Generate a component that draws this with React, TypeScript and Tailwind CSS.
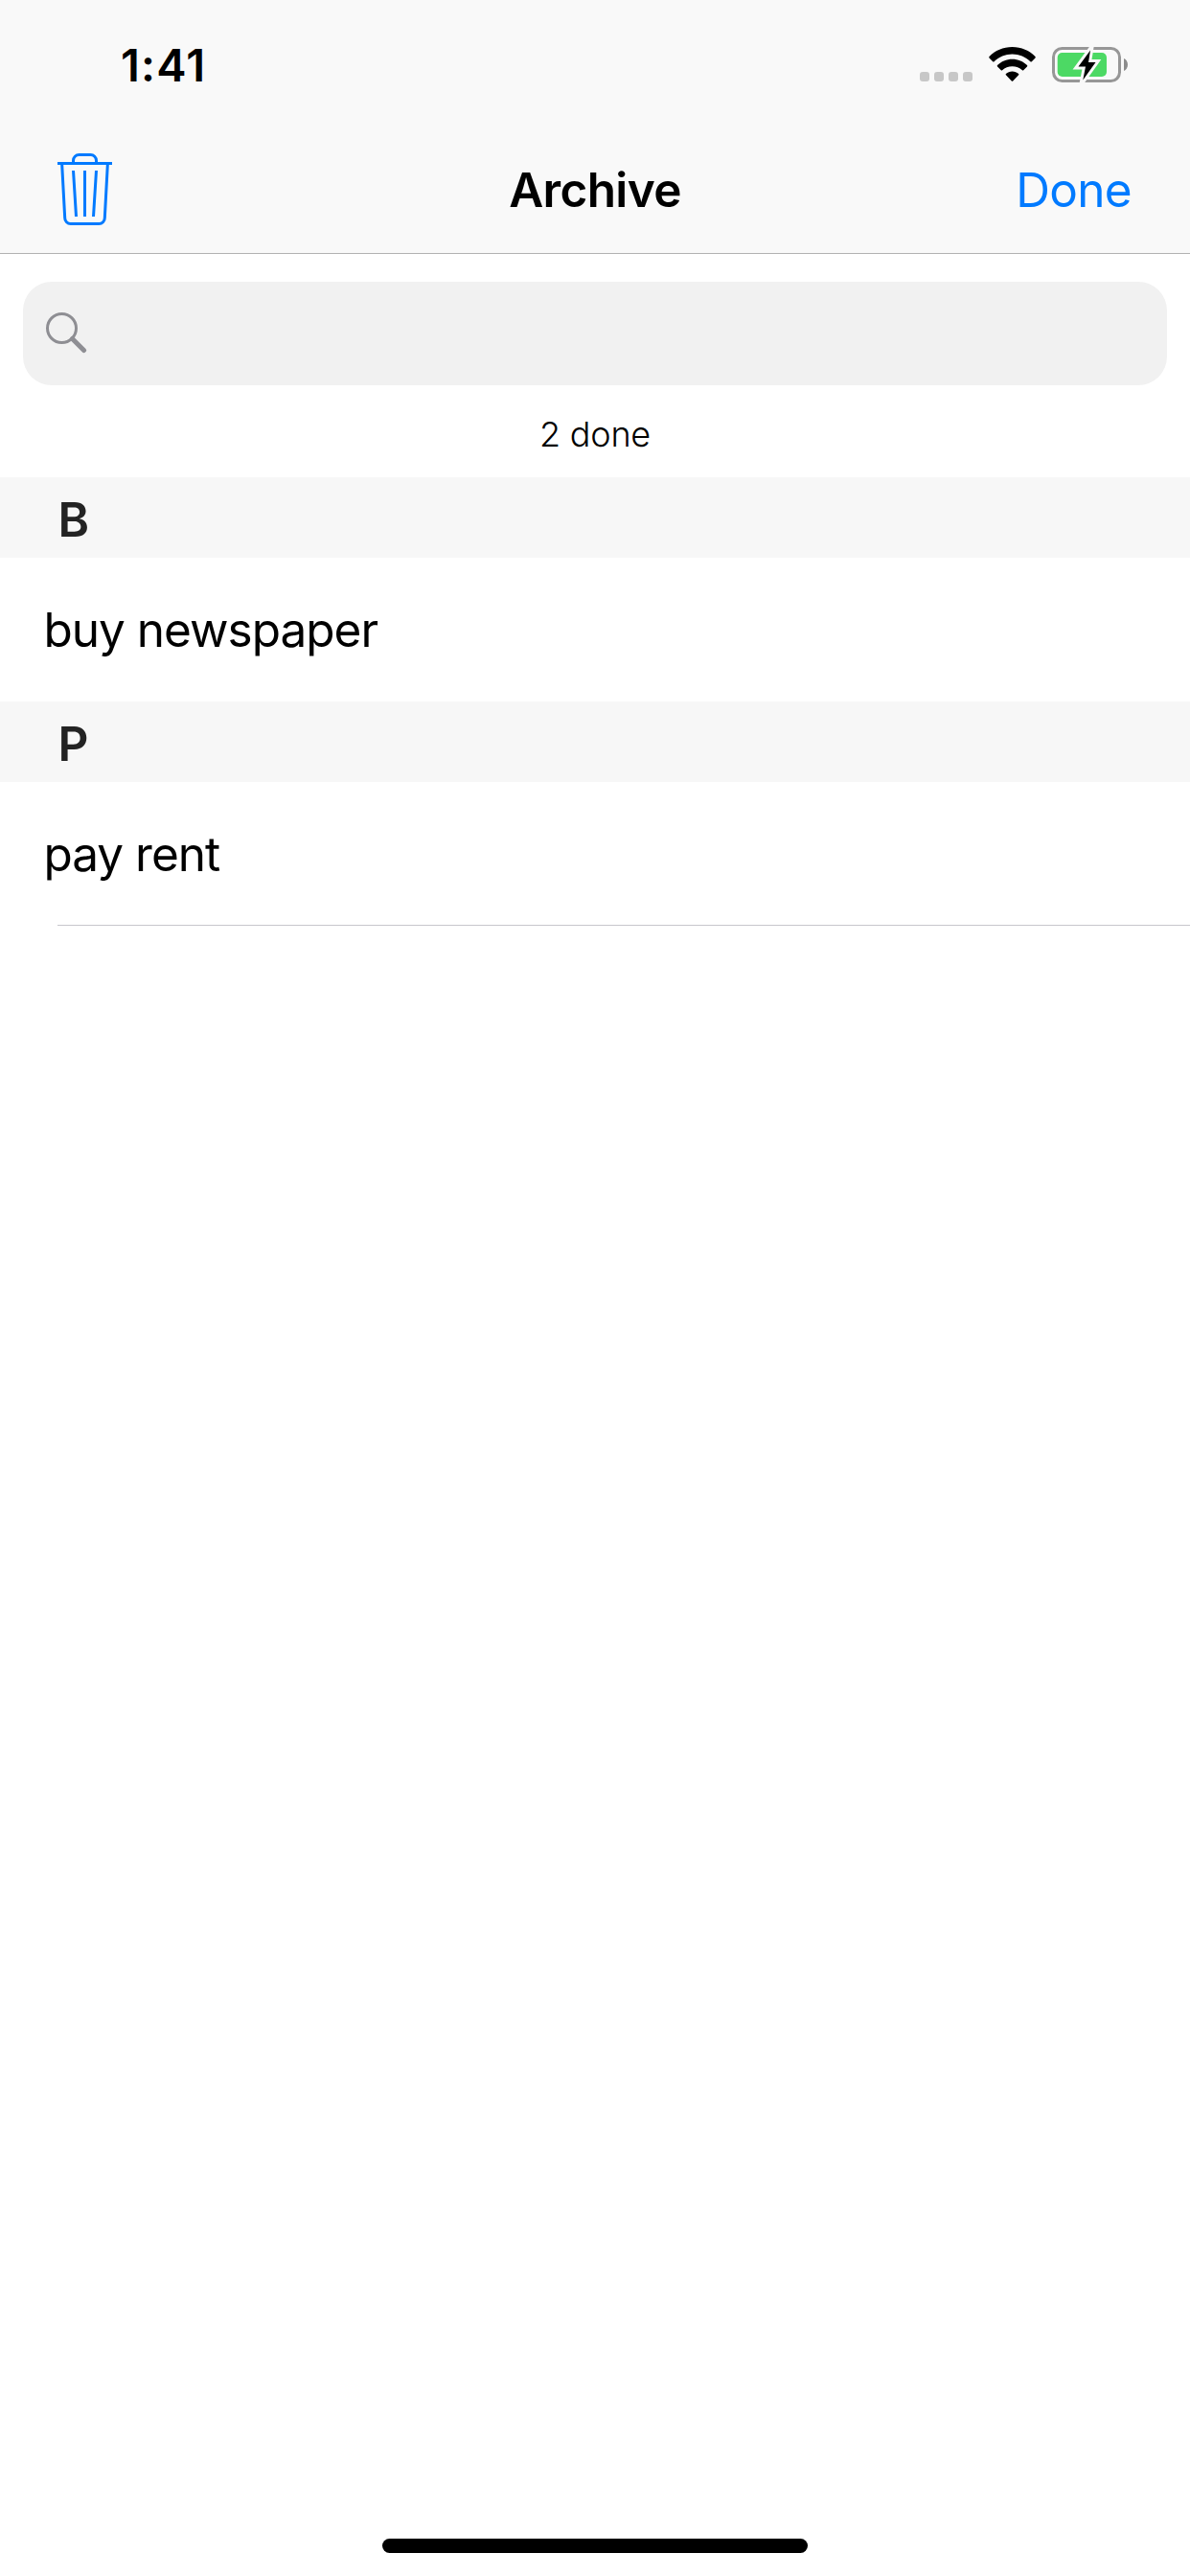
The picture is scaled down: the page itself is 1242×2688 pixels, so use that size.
function TrashIcon() {
  return (
    <svg width="58" height="76" viewBox="0 0 58 76" fill="none" stroke="#007aff" strokeWidth="3">
      <path d="M16.5 10V7.500a6 6 0 0 1 6-6h12a6 6 0 0 1 6 6V10" />
      <path d="M0 10.500H57" />
      <path d="M4.700 12l3 55.500a6 6 0 0 0 6 6h29.600a6 6 0 0 0 6-6l3-55.500" />
      <path d="M16.500 18l3 48M28.500 18v48M40.500 18l-3 48" />
    </svg>
  );
}

function WifiIcon() {
  return (
    <svg width="50" height="36" viewBox="0 0 50 36" fill="#000">
      <path d="M24.500 0C34 0 42.500 3.800 48.500 10c.4.400.4 1 0 1.400l-3.700 3.800c-.4.400-1 .4-1.400 0C38.500 10.200 31.800 7.400 24.500 7.400S10.500 10.200 5.600 15.200c-.4.400-1 .4-1.400 0L.5 11.400c-.4-.4-.4-1 0-1.400C6.500 3.800 15 0 24.500 0Z" />
      <path d="M24.500 12.800c6 0 11.500 2.400 15.500 6.300.4.400.4 1 0 1.400l-3.800 3.700c-.4.400-.9.400-1.300 0C32.200 21.700 28.500 20.200 24.500 20.200s-7.700 1.500-10.400 4c-.4.400-.9.400-1.300 0l-3.800-3.700c-.4-.4-.4-1 0-1.400 4-3.900 9.500-6.300 15.500-6.300Z" />
      <path d="M24.500 25.400c2.500 0 4.800 1 6.600 2.600.4.400.4.900 0 1.300l-5.900 6.200c-.4.400-1 .4-1.400 0l-5.900-6.200c-.4-.4-.4-.9 0-1.300 1.800-1.600 4.100-2.600 6.600-2.600Z" />
    </svg>
  );
}

function BatteryIcon() {
  return (
    <svg width="80" height="37" viewBox="0 0 80 37" fill="none">
      <rect x="1.500" y="1.500" width="69" height="34" rx="9" stroke="#979797" strokeWidth="3" />
      <path d="M75 12v13c2.500-1.100 4-3.700 4-6.500s-1.500-5.400-4-6.500Z" fill="#8c8c8c" />
      <rect x="5.700" y="6" width="51.300" height="25" rx="5" fill="#4cd964" />
      <path
        d="M40 3.500L27.500 20.500H35L32.300 34.500L45.500 16H38Z"
        stroke="#f9f9f9"
        strokeWidth="6"
        strokeMiterlimit="10"
      />
      <path d="M40 3.500L27.500 20.500H35L32.300 34.500L45.500 16H38Z" fill="#000" />
    </svg>
  );
}

function SearchIcon() {
  return (
    <svg width="43" height="43" viewBox="0 0 43 43" fill="none" stroke="#8e8e93">
      <circle cx="16.500" cy="16.500" r="15" strokeWidth="3" />
      <path d="M27.500 27.500L39.500 39.500" strokeWidth="5" strokeLinecap="round" />
    </svg>
  );
}

const sections = [
  { letter: "B", items: ["buy newspaper"] },
  { letter: "P", items: ["pay rent"] },
];

export default function App() {
  return (
    <div className="flex h-[2688px] w-[1242px] flex-col bg-white font-['Inter',sans-serif] text-[49.5px] leading-[60px] text-black">
      <header className="border-b border-[#b2b2b2] bg-[#f9f9f9]">
        <div className="flex h-[132px] items-start justify-between pt-[39px] pr-[64px] pl-[126px]">
          <time className="text-[47px] leading-[57px] font-semibold tracking-[1.2px]">1:41</time>
          <div className="flex items-start pt-[10px]">
            <div className="mt-[26px] mr-[17px] flex gap-[5px]">
              {[0, 1, 2, 3].map((i) => (
                <span key={i} className="size-[10px] rounded-[3px] bg-[#c7c7c7]" />
              ))}
            </div>
            <WifiIcon />
            <div className="ml-[16px]">
              <BatteryIcon />
            </div>
          </div>
        </div>
        <div className="grid h-[132px] grid-cols-3 items-center px-[60px]">
          <button aria-label="Delete all">
            <TrashIcon />
          </button>
          <h1 className="text-center font-semibold tracking-[-0.63px]">Archive</h1>
          <button className="mr-px text-right tracking-[-0.7px] text-[#007aff]">Done</button>
        </div>
      </header>
      <div className="mx-6 mt-[29px] flex h-[108px] items-start rounded-[30px] bg-[#f1f1f1] pt-8 pl-6">
        <SearchIcon />
      </div>
      <p className="flex h-24 items-center justify-center pt-[6px] text-[36px] leading-[44px] font-light tracking-[-0.2px]">
        2 done
      </p>
      {sections.map((s) => (
        <section key={s.letter}>
          <h2 className="flex h-[84px] items-center bg-[#f7f7f7] pt-1 pl-[60.5px] font-semibold text-[#232323]">
            {s.letter}
          </h2>
          {s.items.map((item) => (
            <div key={item} className="flex h-[150px] items-center pl-[45.5px] tracking-[-1px]">
              {item}
            </div>
          ))}
        </section>
      ))}
      <div className="-mt-px ml-[60px] h-px bg-[#c8c7cc]" />
      <div className="mx-auto mt-auto mb-6 h-[15px] w-[444px] rounded-full bg-black" />
    </div>
  );
}
